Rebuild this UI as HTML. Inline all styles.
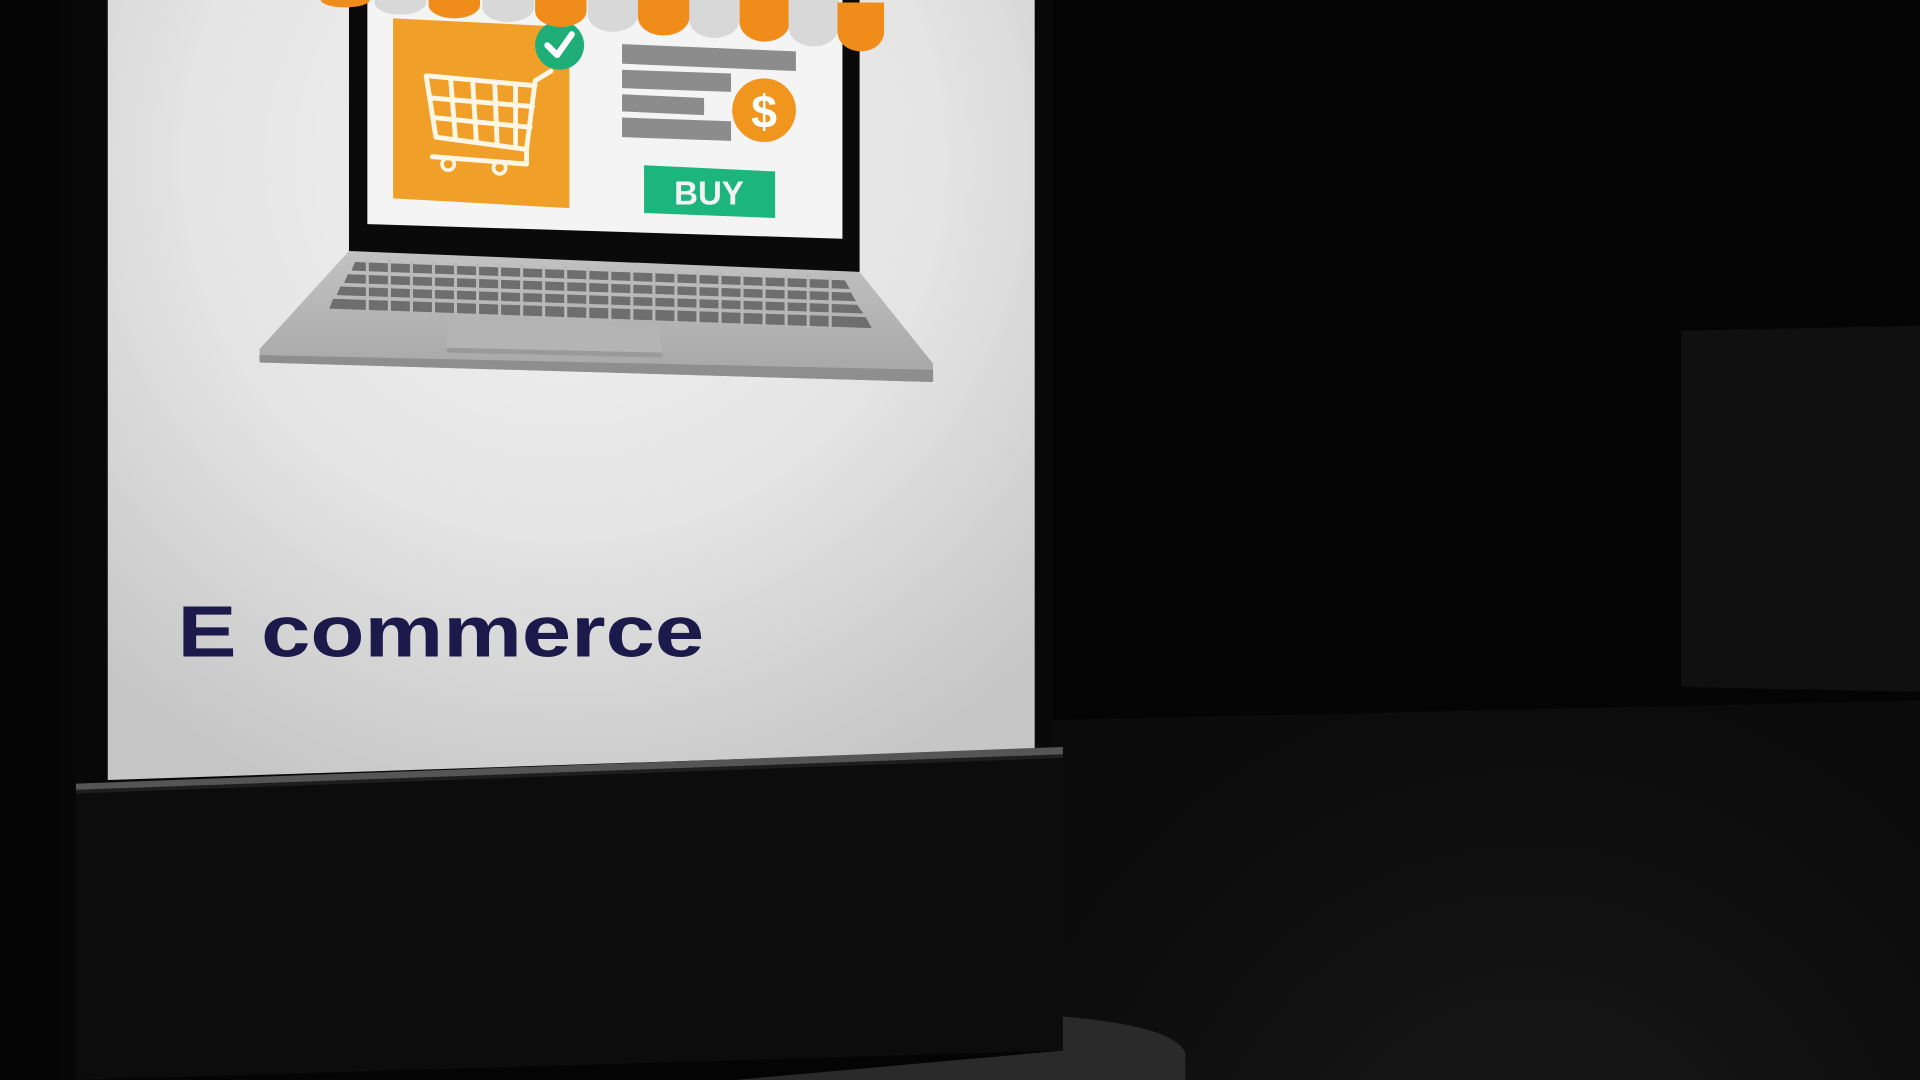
<!DOCTYPE html>
<html><head><meta charset="utf-8"><style>html,body{margin:0;padding:0;background:#040404;overflow:hidden}svg{display:block}</style></head>
<body>
<svg width="1920" height="1080" viewBox="0 0 1568 882" xmlns="http://www.w3.org/2000/svg" preserveAspectRatio="none">
<defs>
<radialGradient id="pg" cx="460" cy="130" r="560" gradientUnits="userSpaceOnUse">
<stop offset="0" stop-color="#f4f4f4"/><stop offset="0.55" stop-color="#e4e4e4"/><stop offset="1" stop-color="#c6c6c6"/>
</radialGradient>
<radialGradient id="fl" cx="1250" cy="1000" r="450" gradientUnits="userSpaceOnUse">
<stop offset="0" stop-color="#191919"/><stop offset="1" stop-color="#0b0b0b"/>
</radialGradient>
<linearGradient id="kb" x1="0" y1="0" x2="0" y2="1"><stop offset="0" stop-color="#c2c2c2"/><stop offset="1" stop-color="#a6a6a6"/></linearGradient>
</defs>
<rect width="1568" height="882" fill="#040404"/>
<path d="M860 588 L1568 572 L1568 882 L860 882 Z" fill="url(#fl)"/>
<path d="M1373 270 L1568 266 L1568 565 L1373 561 Z" fill="#101010"/>
<rect x="47" y="0" width="40" height="882" fill="#060606"/>
<rect x="62" y="0" width="798" height="650" fill="#080808"/>
<path d="M88 0 L845 0 L845 612 L88 637 Z" fill="url(#pg)"/>
<path d="M62 643 L868 612 L868 858 L62 882 Z" fill="#0c0c0c"/>
<path d="M62 640 L868 610 L868 617 L62 646 Z" fill="#555"/>
<path d="M62 645 L868 616 L868 619 L62 648 Z" fill="#1e1e1e"/>
<path d="M868 830 Q960 838 968 860 L968 882 L600 882 L868 858 Z" fill="#2a2a2a"/>
<path d="M285 205 L702 222 L762 297 L762 312 L212 296 L212 285 Z" fill="url(#kb)"/>
<path d="M212 290 L762 302 L762 312 L212 296 Z" fill="#8e8e8e"/>
<g fill="#6e6e6e">
<path d="M290 214 L690 229 L694 236 L287 221 Z"/>
<path d="M284 224 L695 239 L699 246 L281 231 Z"/>
<path d="M278 234 L700 249 L705 256 L275 241 Z"/>
<path d="M272 244 L707 259 L712 268 L269 252 Z"/>
</g>
<g stroke="#b8b8b8" stroke-width="2.5">
<path d="M300 212 V254 M318 212 V254 M336 213 V255 M354 213 V256 M372 214 V257 M390 215 V257 M408 215 V258 M426 216 V259 M444 217 V259 M462 217 V260 M480 218 V261 M498 219 V262 M516 219 V262 M534 220 V263 M552 221 V264 M570 221 V264 M588 222 V265 M606 223 V266 M624 223 V266 M642 224 V267 M660 225 V268 M678 225 V268"/>
</g>
<path d="M365 262 L538 266 L541 292 L365 288 Z" fill="#b4b4b4"/>
<path d="M365 284 L541 288 L541 292 L365 288 Z" fill="#9a9a9a"/>
<path d="M285 0 L702 0 L702 222 L285 205 Z" fill="#0a0a0a"/>
<path d="M300 0 L688 0 L688 195 L300 183 Z" fill="#f4f4f4"/>
<path d="M321 15 L465 22 L465 170 L321 162 Z" fill="#f0a028"/>
<g fill="none" stroke="#fff6e6" stroke-width="4" stroke-linecap="round" stroke-linejoin="round">
<path d="M348 62 L356 112 L430 122 L437 66 L450 58"/>
<path d="M350 62 L437 70 M352 80 L435 87 M354 96 L433 104"/>
<path d="M368 64 L372 114 M386 66 L389 116 M404 67 L406 118 M421 69 L421 120"/>
<path d="M353 128 L430 134 M430 122 L430 134"/>
</g>
<circle cx="366" cy="134" r="5" fill="none" stroke="#fff6e6" stroke-width="3"/>
<circle cx="408" cy="137" r="5" fill="none" stroke="#fff6e6" stroke-width="3"/>
<circle cx="457" cy="37" r="20" fill="#1fae78"/>
<path d="M447 37 L455 45 L467 28" fill="none" stroke="#fff" stroke-width="5" stroke-linecap="round" stroke-linejoin="round"/>
<g fill="#8c8c8c">
<path d="M508 36 L650 42 L650 58 L508 52 Z"/>
<path d="M508 57 L597 60 L597 75 L508 72 Z"/>
<path d="M508 77 L575 80 L575 94 L508 91 Z"/>
<path d="M508 96 L597 99 L597 115 L508 112 Z"/>
</g>
<circle cx="624" cy="90" r="26" fill="#f0961e"/>
<text x="624" y="104" font-family="Liberation Sans, sans-serif" font-weight="bold" font-size="38" fill="#fff" text-anchor="middle">$</text>
<path d="M526 135 L633 140 L633 178 L526 174 Z" fill="#1db57e"/>
<text x="579" y="167" font-family="Liberation Sans, sans-serif" font-weight="bold" font-size="27" fill="#f2f2f2" text-anchor="middle">BUY</text>
<g>
<path d="M262 0 H302 V0 A20 6 0 0 1 262 0 Z" fill="#f08c1a"/>
<path d="M306 0 H348 V2 A21 10 0 0 1 306 2 Z" fill="#d8d8d8"/>
<path d="M350 0 H392 V4 A21 11 0 0 1 350 4 Z" fill="#f08c1a"/>
<path d="M394 0 H436 V6 A21 12 0 0 1 394 6 Z" fill="#d8d8d8"/>
<path d="M437 0 H479 V9 A21 13 0 0 1 437 9 Z" fill="#f08c1a"/>
<path d="M480 0 H521 V12 A20.5 14 0 0 1 480 12 Z" fill="#d8d8d8"/>
<path d="M521 0 H563 V14 A21 15 0 0 1 521 14 Z" fill="#f08c1a"/>
<path d="M563 0 H604 V16 A20.5 15 0 0 1 563 16 Z" fill="#d8d8d8"/>
<path d="M604 0 H645 V18 A20.5 16 0 0 1 604 18 Z" fill="#f08c1a"/>
<path d="M644 0 H685 V22 A20.5 16 0 0 1 644 22 Z" fill="#d8d8d8"/>
<path d="M684 2 H722 V26 A19 16 0 0 1 684 26 Z" fill="#f08c1a"/>
</g>
<text x="145" y="536" font-family="Liberation Sans, sans-serif" font-weight="bold" font-size="64" fill="#1c1a4a" textLength="430" lengthAdjust="spacingAndGlyphs" transform="translate(0,536) scale(1,0.92) translate(0,-536)">E commerce</text>
</svg>
</body></html>
